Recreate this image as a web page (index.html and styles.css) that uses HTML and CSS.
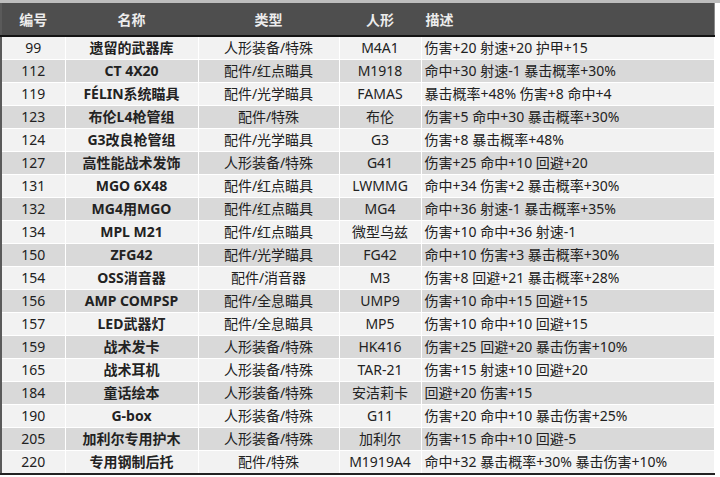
FILE: index.html
```html
<!DOCTYPE html>
<html lang="zh">
<head>
<meta charset="utf-8">
<link rel="stylesheet" href="styles.css">
</head>
<body>
<div class="frame">
<table class="equip">
<colgroup>
<col class="c-no"><col class="c-name"><col class="c-type"><col class="c-doll"><col class="c-desc">
</colgroup>
<thead>
<tr><th>编号</th><th>名称</th><th>类型</th><th>人形</th><th class="left">描述</th></tr>
</thead>
<tbody>
<tr><td>99</td><td class="name">遗留的武器库</td><td>人形装备/特殊</td><td>M4A1</td><td class="desc">伤害+20 射速+20 护甲+15</td></tr>
<tr><td>112</td><td class="name">CT 4X20</td><td>配件/红点瞄具</td><td>M1918</td><td class="desc">命中+30 射速-1 暴击概率+30%</td></tr>
<tr><td>119</td><td class="name">FÉLIN系统瞄具</td><td>配件/光学瞄具</td><td>FAMAS</td><td class="desc">暴击概率+48% 伤害+8 命中+4</td></tr>
<tr><td>123</td><td class="name">布伦L4枪管组</td><td>配件/特殊</td><td>布伦</td><td class="desc">伤害+5 命中+30 暴击概率+30%</td></tr>
<tr><td>124</td><td class="name">G3改良枪管组</td><td>配件/光学瞄具</td><td>G3</td><td class="desc">伤害+8 暴击概率+48%</td></tr>
<tr><td>127</td><td class="name">高性能战术发饰</td><td>人形装备/特殊</td><td>G41</td><td class="desc">伤害+25 命中+10 回避+20</td></tr>
<tr><td>131</td><td class="name">MGO 6X48</td><td>配件/红点瞄具</td><td>LWMMG</td><td class="desc">命中+34 伤害+2 暴击概率+30%</td></tr>
<tr><td>132</td><td class="name">MG4用MGO</td><td>配件/红点瞄具</td><td>MG4</td><td class="desc">命中+36 射速-1 暴击概率+35%</td></tr>
<tr><td>134</td><td class="name">MPL M21</td><td>配件/红点瞄具</td><td>微型乌兹</td><td class="desc">伤害+10 命中+36 射速-1</td></tr>
<tr><td>150</td><td class="name">ZFG42</td><td>配件/光学瞄具</td><td>FG42</td><td class="desc">命中+10 伤害+3 暴击概率+30%</td></tr>
<tr><td>154</td><td class="name">OSS消音器</td><td>配件/消音器</td><td>M3</td><td class="desc">伤害+8 回避+21 暴击概率+28%</td></tr>
<tr><td>156</td><td class="name">AMP COMPSP</td><td>配件/全息瞄具</td><td>UMP9</td><td class="desc">伤害+10 命中+15 回避+15</td></tr>
<tr><td>157</td><td class="name">LED武器灯</td><td>配件/全息瞄具</td><td>MP5</td><td class="desc">伤害+10 命中+10 回避+15</td></tr>
<tr><td>159</td><td class="name">战术发卡</td><td>人形装备/特殊</td><td>HK416</td><td class="desc">伤害+25 回避+20 暴击伤害+10%</td></tr>
<tr><td>165</td><td class="name">战术耳机</td><td>人形装备/特殊</td><td>TAR-21</td><td class="desc">伤害+15 射速+10 回避+20</td></tr>
<tr><td>184</td><td class="name">童话绘本</td><td>人形装备/特殊</td><td>安洁莉卡</td><td class="desc">回避+20 伤害+15</td></tr>
<tr><td>190</td><td class="name">G-box</td><td>人形装备/特殊</td><td>G11</td><td class="desc">伤害+20 命中+10 暴击伤害+25%</td></tr>
<tr><td>205</td><td class="name">加利尔专用护木</td><td>人形装备/特殊</td><td>加利尔</td><td class="desc">伤害+15 命中+10 回避-5</td></tr>
<tr><td>220</td><td class="name">专用钢制后托</td><td>配件/特殊</td><td>M1919A4</td><td class="desc">命中+32 暴击概率+30% 暴击伤害+10%</td></tr>
</tbody>
</table>
</div>
</body>
</html>
```

FILE: styles.css
```css
html, body {
  margin: 0;
  padding: 0;
  background: #ffffff;
}
body {
  font-family: "Noto Sans", "Noto Sans CJK SC", sans-serif;
  color: #222222;
}
.frame {
  width: 720px;
  height: 477px;
  padding-top: 3px;
  background: #ffffff;
  box-sizing: border-box;
  border-top: 3px solid #bdbdbd;
  padding-top: 0;
}
.equip {
  width: 715px;
  margin-left: 0;
  border-collapse: collapse;
  table-layout: fixed;
  border-left: 2px solid #5a5a5a;
  border-bottom: 2px solid #222222;
  border-right: 1px solid #8a8a8a;
}
.c-no { width: 64px; }
.c-name { width: 133px; }
.c-type { width: 141px; }
.c-doll { width: 82px; }
.c-desc { width: auto; }
.equip th {
  background: #4e4e4e;
  color: #ececec;
  font-weight: bold;
  font-size: 14px;
  height: 32px;
  padding: 0;
  text-align: center;
  border-bottom: 2px solid #141414;
  border-left: 1px solid #4e4e4e;
}
.equip th.left {
  text-align: left;
  padding-left: 4px;
}
.equip td {
  height: 22px;
  padding: 0;
  font-size: 14px;
  line-height: 18px;
  text-align: center;
  white-space: nowrap;
  overflow: hidden;
  border: 1px solid #ffffff;
}
.equip tbody tr:nth-child(odd) td { background: #f2f2f2; }
.equip tbody tr:nth-child(even) td { background: #d9d9d9; }
.equip td.name { font-weight: bold; }
.equip td.desc {
  text-align: left;
  padding-left: 3px;
}
```
